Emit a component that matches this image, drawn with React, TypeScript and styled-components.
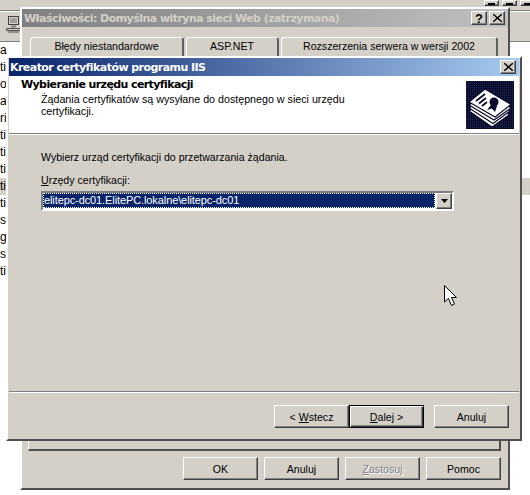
import React from "react";
import styled, { createGlobalStyle, css } from "styled-components";

const Global = createGlobalStyle`
  html, body { margin: 0; padding: 0; background: #fff; }
  body { font-family: "Liberation Sans", Arial, sans-serif; font-size: 11px; color: #000; }
`;

const bevel = css`
  background: #d4d0c8;
  border-style: solid;
  border-width: 1px;
  border-color: #fff #404040 #404040 #fff;
  box-shadow: inset -1px -1px 0 #808080;
  box-sizing: border-box;
`;

const Desktop = styled.div`
  position: relative;
  width: 530px;
  height: 495px;
  overflow: hidden;
  background: #fff;
`;

const Manager = styled.div`
  position: absolute;
  inset: 0;
  display: flex;
  flex-direction: column;
`;

const ManagerTop = styled.div`
  height: 42px;
  background: #d4d0c8;
  box-sizing: border-box;
  display: flex;
  flex-direction: column;
  border-bottom: 1px solid #808080;
`;

const ManagerTitleRow = styled.div`
  height: 11px;
  flex: none;
  display: flex;
  justify-content: flex-end;
  gap: 3px;
  margin-right: -5px;
  border-bottom: 1px solid #808080;
  box-shadow: 0 1px 0 #fff;
  box-sizing: border-box;
`;

const SmallCtl = styled.div`
  ${bevel}
  width: 15px;
  height: 6px;
  display: flex;
  align-items: flex-end;
  justify-content: center;
  &::after {
    content: "";
    width: 7px;
    height: 2px;
    background: #000;
  }
`;

const ManagerTools = styled.div`
  flex: 1;
  display: flex;
  align-items: flex-start;
  padding: 5px 0 0 6px;
`;

const Rows = styled.div`
  flex: 1;
`;

const Row = styled.div<{ $selected?: boolean }>`
  height: 17px;
  line-height: 17px;
  font-size: 12px;
  white-space: nowrap;
  background: ${(p) => (p.$selected ? "#d4d0c8" : "transparent")};
`;

const PropsWindow = styled.div`
  position: absolute;
  left: 20px;
  top: 7px;
  width: 490px;
  height: 483px;
  ${bevel}
  padding: 0;
  display: flex;
  flex-direction: column;
  border-width: 2px;
  border-color: #fff #505050 #505050 #fff;
  box-shadow: none;
`;

const Title = styled.div<{ $active?: boolean }>`
  flex: none;
  height: 18px;
  display: flex;
  align-items: center;
  justify-content: space-between;
  box-sizing: border-box;
  padding-left: ${(p) => (p.$active ? 1 : 2)}px;
  font-family: "DejaVu Sans", Verdana, sans-serif;
  font-weight: 700;
  font-size: 11px;
  letter-spacing: -0.55px;
  white-space: nowrap;
  color: ${(p) => (p.$active ? "#fff" : "#d4d0c8")};
  background: ${(p) =>
    p.$active
      ? "linear-gradient(90deg, #0a246a 0%, #a6caf0 100%)"
      : "linear-gradient(90deg, #808080 0%, #c0c0c0 100%)"};
`;

const TitleButtons = styled.div`
  display: flex;
  gap: 2px;
  padding-right: 3px;
`;

const CtlButton = styled.div`
  ${bevel}
  width: 16px;
  height: 14px;
  display: flex;
  align-items: center;
  justify-content: center;
  color: #000;
  font-family: "Liberation Sans", Arial, sans-serif;
  font-size: 13px;
  letter-spacing: 0;
  font-weight: 700;
`;

const Tabs = styled.div`
  display: flex;
  gap: 2px;
  margin: 10px 0 0 8px;
  height: 19px;
  flex: none;
`;

const Tab = styled.div<{ $w: number }>`
  width: ${(p) => p.$w}px;
  box-sizing: border-box;
  background: #d4d0c8;
  border-top: 1px solid #fff;
  border-left: 1px solid #fff;
  border-right: 2px solid #606060;
  border-radius: 3px 3px 0 0;
  text-align: center;
  font-size: 10.6px;
  line-height: 17px;
  white-space: nowrap;
`;

const TabPanel = styled.div`
  flex: none;
  width: 473px;
  height: 395px;
  margin-left: 6px;
  box-sizing: border-box;
  background: #d4d0c8;
  border-style: solid;
  border-width: 1px 2px 2px 1px;
  border-color: #fff #505050 #505050 #fff;
`;

const BottomBar = styled.div`
  display: flex;
  justify-content: flex-end;
  gap: 6px;
  margin-top: 6px;
  padding-right: 7px;
`;

const Button = styled.div<{ $def?: boolean; $disabled?: boolean }>`
  ${bevel}
  width: 75px;
  height: 23px;
  display: flex;
  align-items: center;
  justify-content: center;
  font-size: 10.6px;
  white-space: nowrap;
  color: ${(p) => (p.$disabled ? "#808080" : "#000")};
  text-shadow: ${(p) => (p.$disabled ? "1px 1px 0 #fff" : "none")};
  ${(p) =>
    p.$def &&
    css`
      border: 1px solid #000;
      box-shadow: inset 1px 1px 0 #fff, inset -1px -1px 0 #404040, inset -2px -2px 0 #808080;
    `}
`;

const Wizard = styled.div`
  position: absolute;
  left: 6px;
  top: 56px;
  width: 516px;
  height: 385px;
  ${bevel}
  border-width: 2px;
  border-color: #fff #505050 #505050 #fff;
  box-shadow: none;
  padding: 0 1px;
  display: flex;
  flex-direction: column;
`;

const WizHeader = styled.div`
  flex: none;
  height: 58px;
  background: #fff;
  display: flex;
  justify-content: space-between;
  box-sizing: border-box;
  padding: 2px 5px 0 12px;
  border-bottom: 1px solid #808080;
  box-shadow: 0 1px 0 #fff;
`;

const HeaderText = styled.div`
  display: flex;
  flex-direction: column;
`;

const HeaderTitle = styled.div`
  font-family: "DejaVu Sans", Verdana, sans-serif;
  font-weight: 700;
  font-size: 11px;
  letter-spacing: -0.6px;
  line-height: 13px;
  white-space: nowrap;
`;

const HeaderDesc = styled.div`
  font-size: 10.7px;
  line-height: 12px;
  margin: 2px 0 0 20px;
  width: 320px;
`;

const HeaderIcon = styled.svg`
  flex: none;
  margin-top: 3px;
`;

const WizBody = styled.div`
  flex: 1;
  padding: 16px 0 0 32px;
  display: flex;
  flex-direction: column;
`;

const BodyText = styled.div`
  font-size: 10.6px;
  line-height: 14px;
  white-space: nowrap;
`;

const FieldLabel = styled(BodyText)`
  margin-top: 10px;
  line-height: 13px;
`;

const Combo = styled.div`
  margin-top: 4px;
  width: 413px;
  height: 20px;
  box-sizing: border-box;
  background: #fff;
  border-style: solid;
  border-width: 2px;
  border-color: #808080 #fff #fff #808080;
  display: flex;
`;

const ComboValue = styled.div`
  flex: 1;
  margin: 0 1px 1px 0;
  background: #0a246a;
  color: #fff;
  outline: 1px dotted #fff;
  outline-offset: -1px;
  font-size: 11px;
  letter-spacing: -0.1px;
  line-height: 15px;
  padding-left: 1px;
  white-space: nowrap;
`;

const ComboArrow = styled.div`
  ${bevel}
  width: 16px;
  display: flex;
  align-items: center;
  justify-content: center;
`;

const WizSeparator = styled.div`
  flex: none;
  height: 1px;
  background: #808080;
  box-shadow: 0 1px 0 #fff;
`;

const WizFooter = styled.div`
  flex: none;
  height: 47px;
  display: flex;
  justify-content: flex-end;
  padding: 13px 10px 0 0;
  box-sizing: border-box;
`;

const Gap = styled.span`
  width: 10px;
`;

const Under = styled.span`
  text-decoration: underline;
`;

const CursorLayer = styled.svg`
  position: absolute;
  left: 444px;
  top: 285px;
`;

const rowsText = ["a", "ti", "ol", "ag", "ri", "ti", "ti", "ti", "ti", "ti", "st", "g", "sl", "ti"];

function ServerIcon() {
  return (
    <svg width="16" height="17" viewBox="0 0 16 17">
      <rect x="2.5" y="0.5" width="10" height="8" fill="#d4d0c8" stroke="#404040" />
      <rect x="4" y="2" width="7" height="5" fill="#a0a0a0" />
      <path d="M5 9.5h5v2H5z" fill="#808080" />
      <path d="M0.5 12.5h14v2h-14zM2 16h11" fill="none" stroke="#505050" />
    </svg>
  );
}

function XGlyph() {
  return (
    <svg width="9" height="8" viewBox="0 0 9 8">
      <path d="M1 0l3.5 3L8 0h1v1L5.5 4 9 7v1H8L4.5 5 1 8H0V7l3.5-3L0 1V0z" fill="#000" />
    </svg>
  );
}

function CertIcon() {
  return (
    <HeaderIcon width="48" height="48" viewBox="0 0 48 48">
      <defs>
        <pattern id="dots" width="2" height="2" patternUnits="userSpaceOnUse">
          <rect width="2" height="2" fill="#0a0a2a" />
          <rect width="1" height="1" fill="#1c2a55" />
        </pattern>
      </defs>
      <rect width="48" height="48" fill="url(#dots)" />
      <g fill="#fff" stroke="#0a0a2a" strokeWidth="1.2">
        <path d="M3 30 L9 26 L39 28 L43 34 L26 46 Z" />
        <path d="M3 27 L9 23 L39 25 L44 30 L27 42.5 Z" />
        <path d="M3 24 L9 20 L39 22 L45 27 L28 39 Z" />
        <path d="M3 21 L19 8 L45 23.5 L29 36 Z" />
      </g>
      <g stroke="#0a0a2a" strokeWidth="1.8" fill="none">
        <path d="M10 20 L19 13" />
        <path d="M13 22.5 L20 17" />
        <path d="M16 25 L21 21" />
      </g>
      <circle cx="28" cy="21" r="4.5" fill="#0a0a2a" />
      <path d="M25 24 L21 29 L26 27.5 L29 31 L31 25 Z" fill="#0a0a2a" />
    </HeaderIcon>
  );
}

export default function App() {
  return (
    <Desktop>
      <Global />
      <Manager>
        <ManagerTop>
          <ManagerTitleRow>
            <SmallCtl />
            <SmallCtl />
            <SmallCtl />
          </ManagerTitleRow>
          <ManagerTools>
            <ServerIcon />
          </ManagerTools>
        </ManagerTop>
        <Rows>
          {rowsText.map((t, i) => (
            <Row key={i} $selected={i === 8}>
              {t}
            </Row>
          ))}
        </Rows>
      </Manager>

      <PropsWindow>
        <Title>
          <span>Właściwości: Domyślna witryna sieci Web (zatrzymana)</span>
          <TitleButtons>
            <CtlButton>?</CtlButton>
            <CtlButton>
              <XGlyph />
            </CtlButton>
          </TitleButtons>
        </Title>
        <Tabs>
          <Tab $w={154}>Błędy niestandardowe</Tab>
          <Tab $w={93}>ASP.NET</Tab>
          <Tab $w={217}>Rozszerzenia serwera w wersji 2002</Tab>
        </Tabs>
        <TabPanel />
        <BottomBar>
          <Button>OK</Button>
          <Button>Anuluj</Button>
          <Button $disabled>
            <span>
              <Under>Z</Under>astosuj
            </span>
          </Button>
          <Button>Pomoc</Button>
        </BottomBar>
      </PropsWindow>

      <Wizard>
        <Title $active>
          <span>Kreator certyfikatów programu IIS</span>
          <TitleButtons>
            <CtlButton>
              <XGlyph />
            </CtlButton>
          </TitleButtons>
        </Title>
        <WizHeader>
          <HeaderText>
            <HeaderTitle>Wybieranie urzędu certyfikacji</HeaderTitle>
            <HeaderDesc>Żądania certyfikatów są wysyłane do dostępnego w sieci urzędu certyfikacji.</HeaderDesc>
          </HeaderText>
          <CertIcon />
        </WizHeader>
        <WizBody>
          <BodyText>Wybierz urząd certyfikacji do przetwarzania żądania.</BodyText>
          <FieldLabel>
            <Under>U</Under>rzędy certyfikacji:
          </FieldLabel>
          <Combo>
            <ComboValue>elitepc-dc01.ElitePC.lokalne\elitepc-dc01</ComboValue>
            <ComboArrow>
              <svg width="7" height="4" viewBox="0 0 7 4">
                <path d="M0 0h7L3.5 4z" fill="#000" />
              </svg>
            </ComboArrow>
          </Combo>
        </WizBody>
        <WizSeparator />
        <WizFooter>
          <Button>
            <span>
              &lt; <Under>W</Under>stecz
            </span>
          </Button>
          <Button $def>
            <span>
              <Under>D</Under>alej &gt;
            </span>
          </Button>
          <Gap />
          <Button>Anuluj</Button>
        </WizFooter>
      </Wizard>

      <CursorLayer width="13" height="22" viewBox="0 0 13 22">
        <path d="M0.5 0.5 V17 L4.5 13.5 L7.5 20.5 L10.5 19 L7.5 12.5 H12.5 Z" fill="#fff" stroke="#000" />
      </CursorLayer>
    </Desktop>
  );
}
